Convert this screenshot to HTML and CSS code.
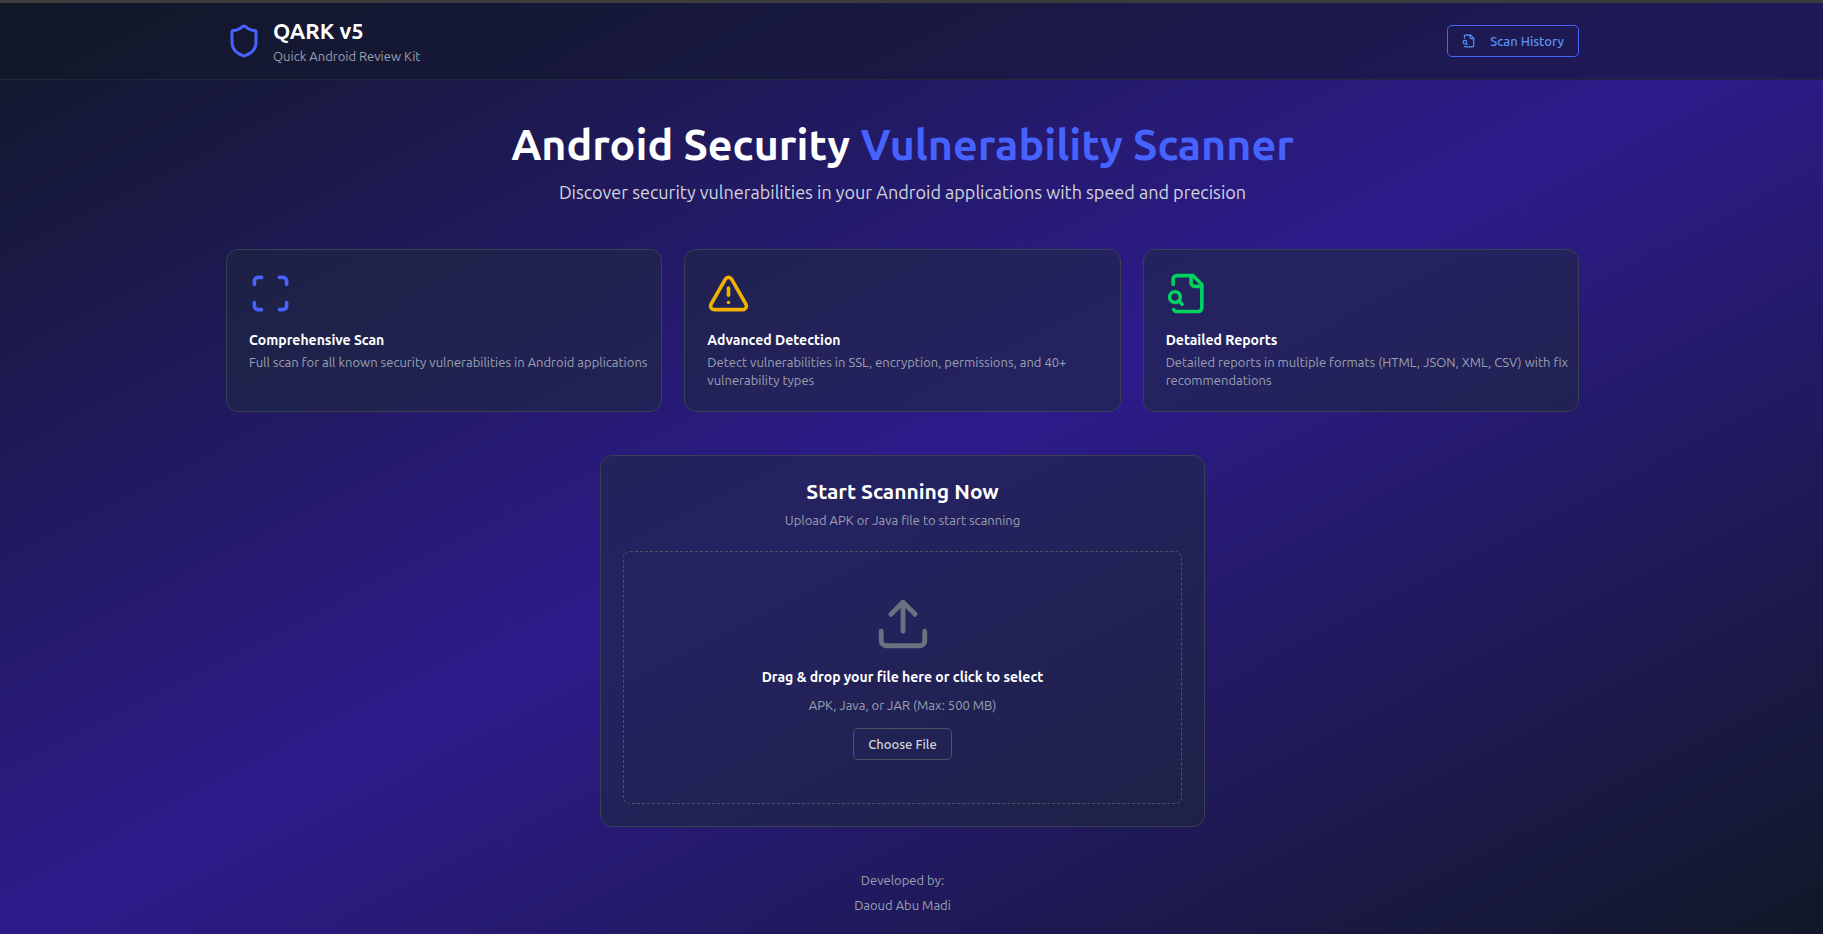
FILE: index.html
```html
<!DOCTYPE html>
<html lang="en">
<head>
<meta charset="utf-8">
<title>QARK v5</title>
<link rel="stylesheet" href="styles.css">
</head>
<body>
<div class="page">
  <header class="header">
    <div class="container header-row">
      <div class="brand">
        <svg class="icon brand-icon" viewBox="0 0 24 24" aria-hidden="true"><path d="M20 13c0 5-3.500 7.500-7.660 8.950a1 1 0 0 1-.67-.01C7.500 20.500 4 18 4 13V6a1 1 0 0 1 1-1c2 0 4.500-1.200 6.240-2.720a1.170 1.170 0 0 1 1.520 0C14.510 3.810 17 5 19 5a1 1 0 0 1 1 1z"/></svg>
        <div>
          <h1 class="brand-name">QARK v5</h1>
          <p class="small">Quick Android Review Kit</p>
        </div>
      </div>
      <button class="button button-history" type="button">
        <svg class="icon button-icon" viewBox="0 0 24 24" aria-hidden="true"><path d="M14 2v4a2 2 0 0 0 2 2h4"/><path d="M4.268 21a2 2 0 0 0 1.727 1H18a2 2 0 0 0 2-2V7l-5-5H6a2 2 0 0 0-2 2v3"/><path d="m9 18-1.500-1.500"/><circle cx="5" cy="14" r="3"/></svg>
        Scan History
      </button>
    </div>
  </header>
  <main class="main">
    <div class="container">
      <section class="hero">
        <h2 class="hero-title">Android Security <span class="accent">Vulnerability Scanner</span></h2>
        <p class="hero-text">Discover security vulnerabilities in your Android applications with speed and precision</p>
      </section>
      <section class="features">
        <article class="card feature">
          <svg class="icon card-icon blue" viewBox="0 0 24 24" aria-hidden="true"><path d="M3 7V5a2 2 0 0 1 2-2h2"/><path d="M17 3h2a2 2 0 0 1 2 2v2"/><path d="M21 17v2a2 2 0 0 1-2 2h-2"/><path d="M7 21H5a2 2 0 0 1-2-2v-2"/></svg>
          <h3 class="card-title">Comprehensive Scan</h3>
          <p class="small">Full scan for all known security vulnerabilities in Android applications</p>
        </article>
        <article class="card feature">
          <svg class="icon card-icon yellow" viewBox="0 0 24 24" aria-hidden="true"><path d="m21.730 18-8-14a2 2 0 0 0-3.480 0l-8 14A2 2 0 0 0 4 21h16a2 2 0 0 0 1.730-3"/><path d="M12 9v4"/><path d="M12 17h.01"/></svg>
          <h3 class="card-title">Advanced Detection</h3>
          <p class="small">Detect vulnerabilities in SSL, encryption, permissions, and 40+ vulnerability types</p>
        </article>
        <article class="card feature">
          <svg class="icon card-icon green" viewBox="0 0 24 24" aria-hidden="true"><path d="M14 2v4a2 2 0 0 0 2 2h4"/><path d="M4.268 21a2 2 0 0 0 1.727 1H18a2 2 0 0 0 2-2V7l-5-5H6a2 2 0 0 0-2 2v3"/><path d="m9 18-1.500-1.500"/><circle cx="5" cy="14" r="3"/></svg>
          <h3 class="card-title">Detailed Reports</h3>
          <p class="small">Detailed reports in multiple formats (HTML, JSON, XML, CSV) with fix recommendations</p>
        </article>
      </section>
      <section class="card upload">
        <h2 class="upload-title">Start Scanning Now</h2>
        <p class="small">Upload APK or Java file to start scanning</p>
        <div class="dropzone">
          <svg class="icon drop-icon" viewBox="0 0 24 24" aria-hidden="true"><path d="M21 15v4a2 2 0 0 1-2 2H5a2 2 0 0 1-2-2v-4"/><path d="m17 8-5-5-5 5"/><path d="M12 3v12"/></svg>
          <h3 class="drop-title">Drag &amp; drop your file here or click to select</h3>
          <p class="small">APK, Java, or JAR (Max: 500 MB)</p>
          <button class="button button-file" type="button">Choose File</button>
        </div>
      </section>
    </div>
  </main>
  <footer class="footer small">
    <p>Developed by:</p>
    <p>Daoud Abu Madi</p>
  </footer>
</div>
</body>
</html>
```
FILE: styles.css
```css
* { box-sizing: border-box; margin: 0; }

body {
  font-family: Ubuntu, "Open Sans", "Noto Sans", sans-serif;
  color: #fff;
  background: #111827;
}

.page {
  --gutter: 18px;
  min-height: 100vh;
  border-top: 3px solid #3c3c3c;
  background: linear-gradient(to bottom right, #111827, #2d1b8b, #111827);
}

.container {
  max-width: 1381px;
  margin: 0 auto;
  padding: 0 14px;
}

.icon {
  display: block;
  fill: none;
  stroke: currentColor;
  stroke-width: 2;
  stroke-linecap: round;
  stroke-linejoin: round;
}

.small { font-size: 13px; line-height: 18px; color: #99a1af; }

.header {
  padding: 14px var(--gutter) 14px 0;
  border-bottom: 1px solid #1e2939;
  background: rgba(17, 24, 39, 0.5);
}
.header-row { display: flex; align-items: center; justify-content: space-between; }
.brand { display: flex; align-items: center; gap: 11px; }
.brand-icon { width: 36px; height: 36px; color: #4763ff; }
.brand-name { padding-bottom: 2px; font-size: 22px; line-height: 28px; font-weight: 600; }

.button {
  display: inline-flex;
  align-items: center;
  justify-content: center;
  height: 32px;
  padding: 0 14px;
  border: 1px solid #4a5565;
  border-radius: 5px;
  background: transparent;
  font: 500 13px/18px Ubuntu, "Open Sans", "Noto Sans", sans-serif;
}
.button-history { gap: 14px; border-color: #4763ff; color: #5b94f6; }
.button-icon { width: 14px; height: 14px; }

.main { padding: 43px var(--gutter) 0 0; }

.hero { margin-bottom: 43px; text-align: center; }
.hero-title { margin-bottom: 14px; font-size: 43px; line-height: 43px; font-weight: 600; }
.accent { color: #4763ff; }
.hero-text { padding-bottom: 2px; font-size: 18px; line-height: 24px; color: #d1d5dc; }

.features { display: grid; grid-template-columns: repeat(3, 1fr); gap: 22px; margin-bottom: 43px; }
.card {
  padding: 22px;
  border: 1px solid #364153;
  border-radius: 12px;
  background: rgba(30, 41, 57, 0.5);
}
.feature { padding-right: 8px; }
.card-icon { width: 43px; height: 43px; margin-bottom: 14px; }
.blue { color: #4763ff; }
.yellow { color: #f0b100; }
.green { color: #00d45f; }
.card-title { margin-bottom: 1px; font-size: 14px; line-height: 23px; font-weight: 600; }

.upload { max-width: 605px; margin: 0 auto; text-align: center; }
.upload-title { margin-bottom: 7px; font-size: 21px; line-height: 26px; font-weight: 600; }
.dropzone {
  display: flex;
  flex-direction: column;
  align-items: center;
  margin-top: 22px;
  padding: 43px;
  border: 1px dashed #4a5565;
  border-radius: 7px;
}
.drop-icon { width: 58px; height: 58px; margin-bottom: 14px; color: #6a7282; }
.drop-title { margin-bottom: 9px; font-size: 14px; line-height: 20px; font-weight: 600; }
.button-file { margin-top: 14px; color: #d1d5dc; }

.footer {
  display: grid;
  gap: 7px;
  padding: 44px var(--gutter) 18px 0;
  text-align: center;
}
```
